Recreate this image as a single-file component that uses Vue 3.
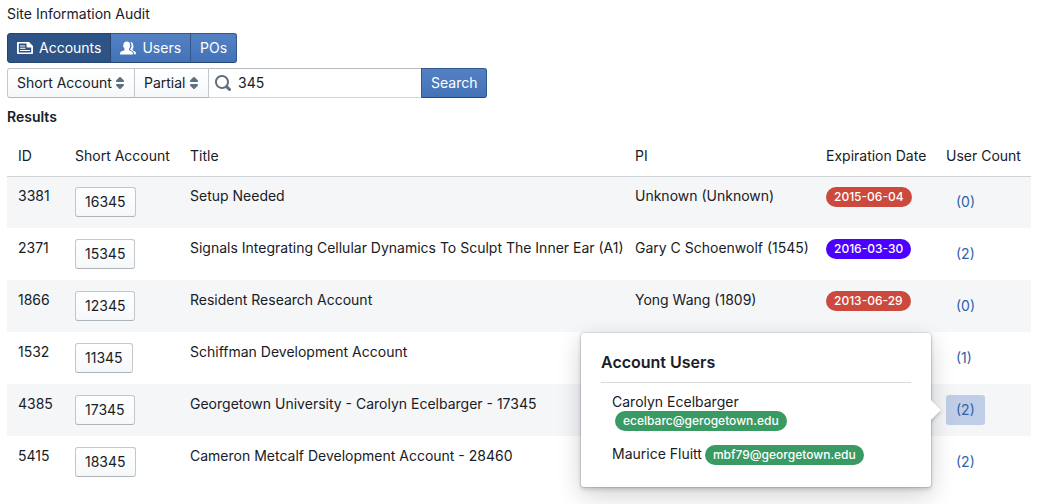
<script setup>
import { ref } from 'vue'

const tab = ref('Accounts')
const query = ref('345')
const field = ref('Short Account')
const match = ref('Partial')
const openId = ref(4385)

const rows = [
  { id: 3381, account: '16345', title: 'Setup Needed', pi: 'Unknown (Unknown)', date: '2015-06-04', tone: 'danger', count: 0 },
  { id: 2371, account: '15345', title: 'Signals Integrating Cellular Dynamics To Sculpt The Inner Ear (A1)', pi: 'Gary C Schoenwolf (1545)', date: '2016-03-30', tone: 'vivid', count: 2 },
  { id: 1866, account: '12345', title: 'Resident Research Account', pi: 'Yong Wang (1809)', date: '2013-06-29', tone: 'danger', count: 0 },
  { id: 1532, account: '11345', title: 'Schiffman Development Account', count: 1 },
  { id: 4385, account: '17345', title: 'Georgetown University - Carolyn Ecelbarger - 17345', count: 2 },
  { id: 5415, account: '18345', title: 'Cameron Metcalf Development Account - 28460', count: 2 }
]

const users = [
  { name: 'Carolyn Ecelbarger', email: 'ecelbarc@gerogetown.edu' },
  { name: 'Maurice Fluitt', email: 'mbf79@georgetown.edu' }
]

function toggle(id) {
  openId.value = openId.value === id ? null : id
}
</script>

<template>
  <main class="page">
    <div class="caption">Site Information Audit</div>

    <div class="group tabs">
      <button type="button" class="btn primary" :class="{ active: tab === 'Accounts' }" @click="tab = 'Accounts'">
        <svg class="icon" viewBox="0 0 16 16" aria-hidden="true">
          <path fill-rule="evenodd" d="M1 2h10.600c.3 0 .5.1.7.3l3.400 3.400c.2.2.3.4.3.700V13c0 .6-.4 1-1 1H1c-.6 0-1-.4-1-1V3c0-.6.4-1 1-1zm.8 1.600v8.800h12.400V7.500h-3.700c-.6 0-1-.4-1-1V3.600zM3 5.500h5v1H3zm0 2.300h5.500v1H3zm0 2.200h10v1H3z" />
        </svg>
        <span>Accounts</span>
      </button>
      <button type="button" class="btn primary" :class="{ active: tab === 'Users' }" @click="tab = 'Users'">
        <svg class="icon" viewBox="0 0 16 16" aria-hidden="true">
          <path d="M6.8 1.6c2.1 0 3.3 1.4 3.2 3.4 0 .4.3.5.3 1 0 .6-.4.8-.5 1.2-.2.6-.4 1-.8 1.4v1.1c.2 1.2 3.2 1.3 3.7 2.7.2.5.3 1.3.3 2.1H0c0-.8.1-1.600.3-2.100.5-1.400 4-1.500 4.200-2.700V8.600c-.4-.4-.7-.9-.8-1.400-.2-.4-.6-.6-.6-1.200 0-.5.3-.6.3-1 0-2 1.300-3.400 3.400-3.400z" />
          <path d="M10.300 2c1.600-.2 2.700.900 2.700 2.500 0 1.100.8 1.400.5 2.600-.2.700-.5 1.200-.9 1.600v1c.3 1 2.400 1.300 3 2.400.3.600.4 1.400.4 2.200h-2.100c0-1.400-.3-2.600-1.400-3.300-.8-.5-1.600-.8-2.200-1.300V9c.4-.5.7-1 .8-1.500.4-.5.6-.9.600-1.600 0-.4-.2-.7-.3-.9 0-1.200-.4-2.200-1.100-3z" />
        </svg>
        <span>Users</span>
      </button>
      <button type="button" class="btn primary" :class="{ active: tab === 'POs' }" @click="tab = 'POs'">POs</button>
    </div>

    <form class="group search" @submit.prevent>
      <div class="select">
        <select v-model="field" aria-label="Search field">
          <option>Short Account</option>
          <option>Title</option>
        </select>
        <svg class="icon caret" viewBox="0 0 16 16" aria-hidden="true">
          <path d="M5 7h6a1.003 1.003 0 00.71-1.710l-3-3C8.530 2.110 8.280 2 8 2s-.53.110-.71.290l-3 3A1.003 1.003 0 005 7zm6 2H5a1.003 1.003 0 00-.71 1.710l3 3c.18.18.43.29.71.29s.53-.11.71-.29l3-3A1.003 1.003 0 0011 9z" />
        </svg>
      </div>
      <div class="select">
        <select v-model="match" aria-label="Match type">
          <option>Partial</option>
          <option>Exact</option>
        </select>
        <svg class="icon caret" viewBox="0 0 16 16" aria-hidden="true">
          <path d="M5 7h6a1.003 1.003 0 00.71-1.710l-3-3C8.530 2.110 8.280 2 8 2s-.53.110-.71.290l-3 3A1.003 1.003 0 005 7zm6 2H5a1.003 1.003 0 00-.71 1.710l3 3c.18.18.43.29.71.29s.53-.11.71-.29l3-3A1.003 1.003 0 0011 9z" />
        </svg>
      </div>
      <label class="field">
        <svg class="icon" viewBox="0 0 16 16" aria-hidden="true">
          <path d="M15.550 13.430l-2.670-2.680a6.940 6.940 0 001.110-3.760c0-3.870-3.130-7-7-7s-7 3.130-7 7 3.130 7 7 7c1.390 0 2.680-.42 3.760-1.110l2.680 2.670a1.498 1.498 0 102.120-2.120zm-8.560-1.440c-2.760 0-5-2.240-5-5s2.240-5 5-5 5 2.240 5 5-2.240 5-5 5z" />
        </svg>
        <input v-model="query" type="text" aria-label="Search text" />
      </label>
      <button type="submit" class="btn primary">Search</button>
    </form>

    <h1 class="results">Results</h1>

    <table class="table">
      <colgroup>
        <col class="c-id" /><col class="c-account" /><col /><col class="c-pi" /><col class="c-date" /><col class="c-count" />
      </colgroup>
      <thead>
        <tr>
          <th>ID</th>
          <th>Short Account</th>
          <th>Title</th>
          <th>PI</th>
          <th>Expiration Date</th>
          <th>User Count</th>
        </tr>
      </thead>
      <tbody>
        <tr v-for="row in rows" :key="row.id">
          <td>{{ row.id }}</td>
          <td><button type="button" class="btn">{{ row.account }}</button></td>
          <td>{{ row.title }}</td>
          <td>{{ row.pi }}</td>
          <td><span v-if="row.date" class="tag" :class="row.tone">{{ row.date }}</span></td>
          <td>
            <div class="anchor">
              <button type="button" class="btn minimal" :class="{ active: openId === row.id }" @click="toggle(row.id)">({{ row.count }})</button>
              <section v-if="openId === row.id" class="popover">
                <h2>Account Users</h2>
                <ul>
                  <li v-for="user in users" :key="user.email">
                    {{ user.name }}
                    <span class="tag success">{{ user.email }}</span>
                  </li>
                </ul>
              </section>
            </div>
          </td>
        </tr>
      </tbody>
    </table>
  </main>
</template>

<style>
body {
  background: #fff;
}
</style>

<style scoped>
.page {
  padding: 5px 12px 16px 7px;
  font-family: Inter, "Liberation Sans", sans-serif;
  font-size: 14px;
  line-height: 18px;
  color: #182026;
}
.page * {
  box-sizing: border-box;
}
.caption {
  margin-bottom: 10px;
}
.group {
  display: flex;
}
.tabs {
  margin-bottom: 5px;
}
.btn {
  display: inline-flex;
  align-items: center;
  justify-content: center;
  gap: 6px;
  height: 30px;
  margin: 0;
  padding: 0 9px;
  border: 1px solid #c3c7cb;
  border-bottom-color: #b0b5b9;
  border-radius: 3px;
  background: linear-gradient(#fff, #f5f8fa);
  color: #182026;
  font: inherit;
  white-space: nowrap;
  vertical-align: top;
  cursor: pointer;
}
.primary {
  border-color: #30588f;
  border-bottom-color: #274873;
  background: linear-gradient(#5481c2, #4372b8);
  color: #fff;
}
.primary.active {
  border-color: #26456e;
  background: #2e5487;
}
.group > :not(:first-child) {
  margin-left: -1px;
}
.group > :not(:first-child):not(:last-child) {
  border-radius: 0;
}
.group > :first-child {
  border-radius: 3px 0 0 3px;
}
.group > :last-child {
  border-radius: 0 3px 3px 0;
}
.group > .active {
  z-index: 1;
}
.icon {
  flex: none;
  width: 16px;
  height: 16px;
  fill: currentColor;
}
.select {
  position: relative;
  height: 30px;
  border: 1px solid #c3c7cb;
  border-bottom-color: #b0b5b9;
  background: linear-gradient(#fff, #f5f8fa);
}
.select select {
  appearance: none;
  height: 28px;
  padding: 0 22px 0 9px;
  border: 0;
  background: none;
  color: inherit;
  font: inherit;
}
.caret {
  position: absolute;
  top: 6px;
  right: 6px;
  color: #5c7080;
  pointer-events: none;
}
.field {
  display: flex;
  align-items: center;
  gap: 7px;
  width: 214px;
  height: 30px;
  padding: 0 6px;
  border: 1px solid #d5d8da;
  border-top-color: #b9bdc0;
  background: #fff;
  color: #5c7080;
}
.field input {
  flex: 1;
  min-width: 0;
  padding: 0;
  border: 0;
  outline: 0;
  background: none;
  color: #182026;
  font: inherit;
}
.results {
  margin: 10px 0;
  font-size: 14px;
  font-weight: 600;
  line-height: 18px;
}
.table {
  width: 100%;
  table-layout: fixed;
  border-collapse: collapse;
}
.c-id { width: 57px; }
.c-account { width: 115px; }
.c-pi { width: 191px; }
.c-date { width: 120px; }
.c-count { width: 96px; }
th,
td {
  padding: 11px;
  text-align: left;
  vertical-align: top;
  font-weight: 400;
  white-space: nowrap;
}
tbody tr:first-child td {
  box-shadow: inset 0 1px 0 #d1d4d7;
}
tbody tr:nth-child(odd) {
  background: #f5f6f8;
}
.tag {
  display: inline-block;
  padding: 2px 8px;
  border-radius: 10px;
  color: #fff;
  font-size: 12px;
  font-weight: 500;
  line-height: 16px;
  vertical-align: top;
}
.danger { background: #cb493d; }
.vivid { background: #4c00ff; }
.success { background: #3a9a63; }
.anchor {
  position: relative;
  display: flex;
  width: fit-content;
}
.minimal {
  padding: 0 10px;
  border: 0;
  background: none;
  color: #3062a8;
}
.minimal.active {
  background: #bfcee6;
}
.popover {
  position: absolute;
  z-index: 2;
  top: 50%;
  right: calc(100% + 15px);
  width: 350px;
  padding: 20px 20px 18px;
  border-radius: 3px;
  background: #fff;
  box-shadow: 0 0 0 1px rgba(16, 22, 26, 0.1), 0 2px 4px rgba(16, 22, 26, 0.2), 0 8px 24px rgba(16, 22, 26, 0.2);
  transform: translateY(-50%);
}
.popover::before {
  content: "";
  position: absolute;
  top: calc(50% - 7px);
  right: -7px;
  width: 14px;
  height: 14px;
  background: #fff;
  box-shadow: 1px 1px 4px rgba(16, 22, 26, 0.25);
  transform: rotate(45deg);
}
.popover::after {
  content: "";
  position: absolute;
  top: calc(50% - 18px);
  right: 0;
  width: 16px;
  height: 36px;
  background: #fff;
}
.popover h2 {
  margin: 0;
  padding-bottom: 10px;
  border-bottom: 1px solid #d8dadc;
  font-size: 16px;
  font-weight: 600;
  line-height: 19px;
}
.popover ul {
  margin: 0;
  padding: 0;
  list-style: none;
}
.popover li {
  display: flex;
  flex-wrap: wrap;
  padding: 10px 11px 4px;
}
.popover li .tag {
  margin-left: 3px;
}
</style>
